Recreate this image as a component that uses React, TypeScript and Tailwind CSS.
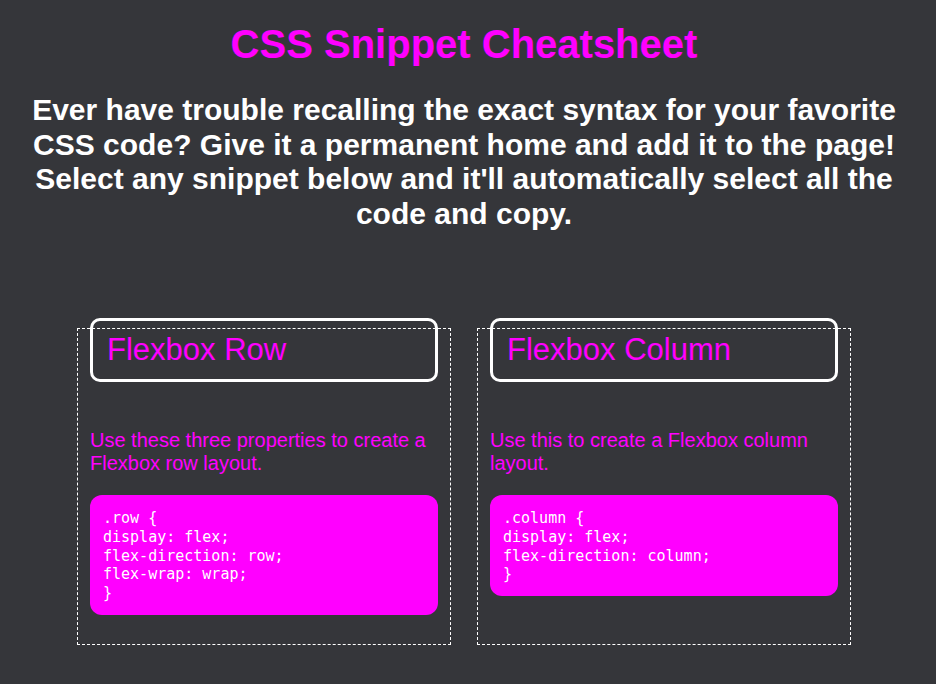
const snippets = [
  {
    title: 'Flexbox Row',
    description: 'Use these three properties to create a Flexbox row layout.',
    code: ['.row {', 'display: flex;', 'flex-direction: row;', 'flex-wrap: wrap;', '}'],
  },
  {
    title: 'Flexbox Column',
    description: 'Use this to create a Flexbox column layout.',
    code: ['.column {', 'display: flex;', 'flex-direction: column;', '}'],
  },
];

function SnippetCard({ title, description, code }: { title: string; description: string; code: string[] }) {
  return (
    <div className="w-[374px] border border-dashed border-white px-[12px] pb-[29px]">
      <div className="mt-[-11px] rounded-[10px] border-[3px] border-white px-[14px] py-[11px]">
        <h2 className="text-[31px] leading-[36px] text-[#ff00ff]">{title}</h2>
      </div>
      <p className="mt-[47px] text-[20px] leading-[23px] text-[#ff00ff]">{description}</p>
      <pre
        className="mt-[20px] rounded-xl bg-[#ff00ff] px-[13px] pt-[14px] pb-[12px] text-[15px] leading-[18.75px] text-white"
        style={{ fontFamily: '"DejaVu Sans Mono", monospace' }}
      >
        {code.join('\n')}
      </pre>
    </div>
  );
}

export default function App() {
  return (
    <div
      className="min-h-[684px] bg-[#35363a] pt-[21px] pr-[8px] pb-10"
      style={{ fontFamily: '"Liberation Sans", Arial, sans-serif' }}
    >
      <h1 className="text-center text-[40px] font-bold leading-[46px] text-[#ff00ff]">CSS Snippet Cheatsheet</h1>
      <p className="mx-auto mt-[26px] w-[880px] text-center text-[30px] font-bold leading-[34.5px] text-white">
        Ever have trouble recalling the exact syntax for your favorite CSS code? Give it a permanent home and add it to
        the page! Select any snippet below and it'll automatically select all the code and copy.
      </p>
      <div className="mt-[97px] flex items-stretch justify-center gap-[26px]">
        {snippets.map((s) => (
          <SnippetCard key={s.title} {...s} />
        ))}
      </div>
    </div>
  );
}
